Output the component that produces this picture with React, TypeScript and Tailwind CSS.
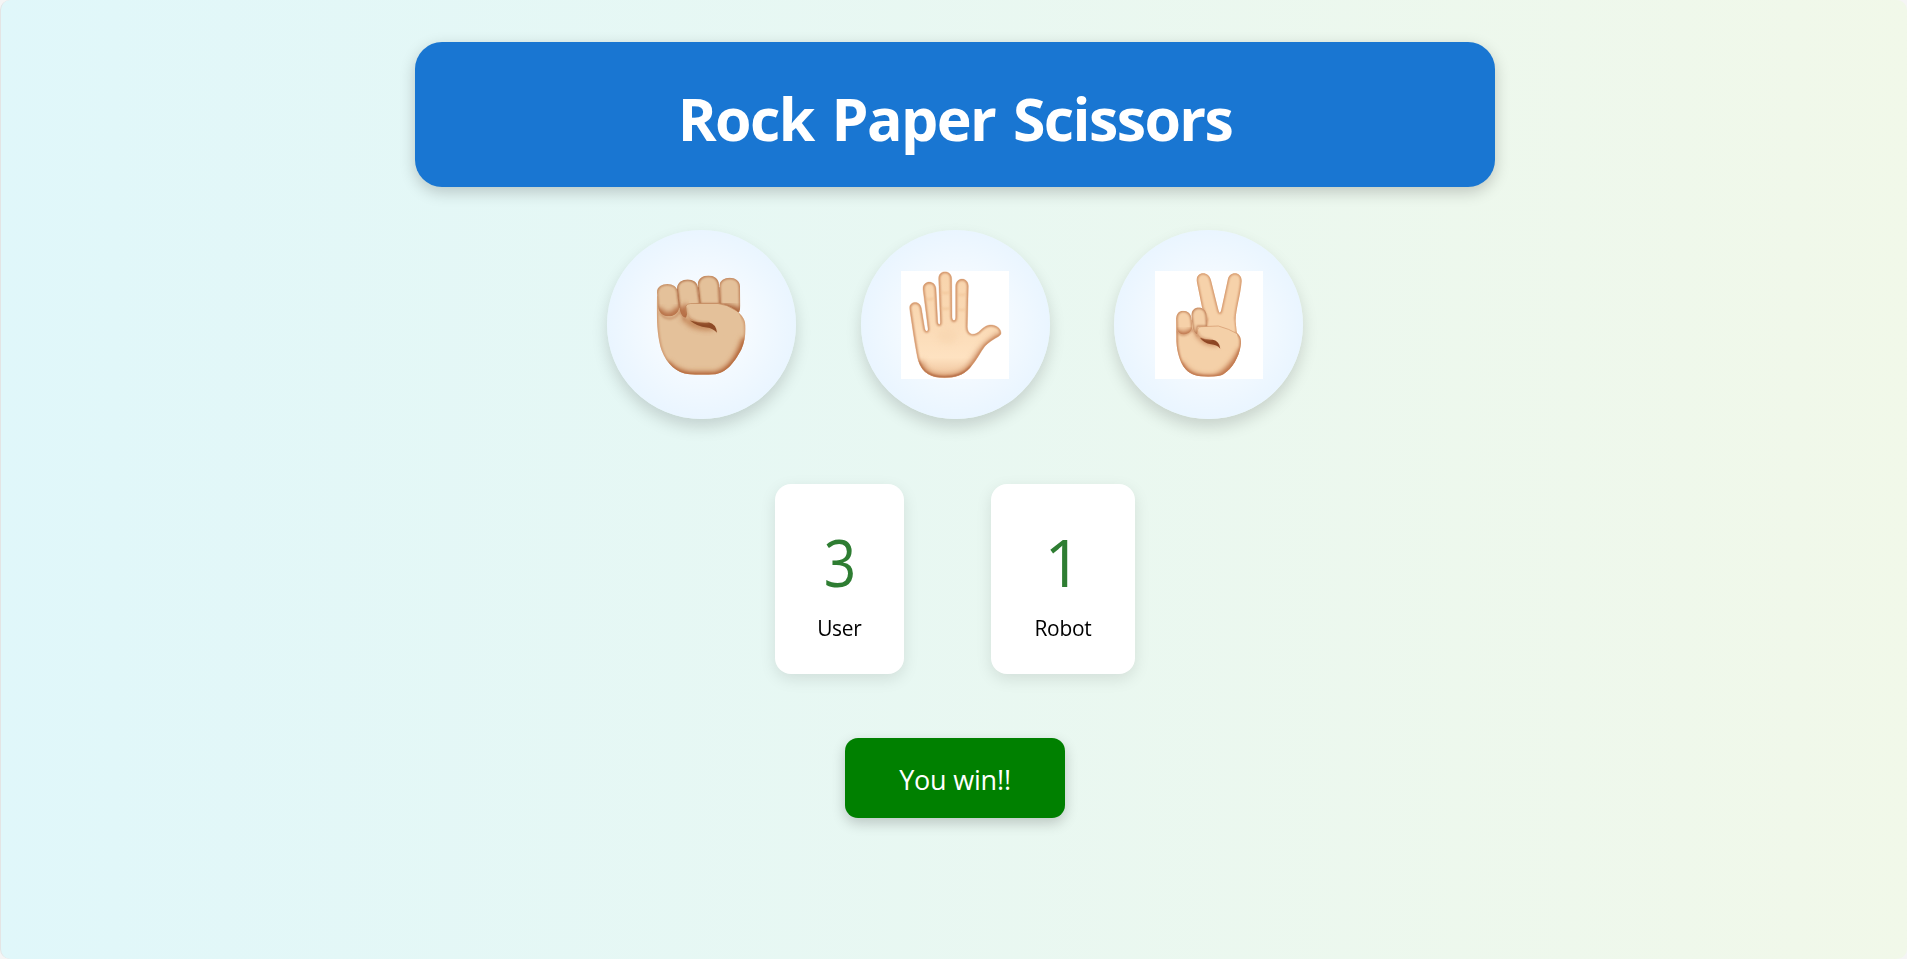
import type { ReactNode } from "react";

function Fist() {
  const finger = "fill-[#e4c19a]";
  return (
    <svg viewBox="142 151.5 324 324" className="size-[108px]" aria-hidden="true">
      <defs>
        <filter id="f-b2" x="-30%" y="-30%" width="160%" height="160%"><feGaussianBlur stdDeviation="2" /></filter>
        <filter id="f-b3" x="-30%" y="-30%" width="160%" height="160%"><feGaussianBlur stdDeviation="3" /></filter>
        <filter id="f-b8" x="-40%" y="-40%" width="180%" height="180%"><feGaussianBlur stdDeviation="8" /></filter>
        <clipPath id="f-body"><path d="M169 225C167 290 169 350 183 390C198 430 228 458 266 461Q300 464 345 461C385 455 410 410 423 385C433 362 437 330 433 305C428 288 418 280 405 268L390 240L180 235Z" /></clipPath>
        <clipPath id="f-1"><path d="M169 216C168 183 231 182 231 216L236 260C232 296 176 298 172 258Z" /></clipPath>
        <clipPath id="f-2"><path d="M229 202C232 168 291 169 292 202L299 252L265 262L256 292C244 290 238 276 236 260Z" /></clipPath>
        <clipPath id="f-3"><path d="M291 193C292 156 354 156 355 193L358 252H298Z" /></clipPath>
        <clipPath id="f-4"><path d="M356 196C358 163 418 163 418 198L419 255Q419 268 415 276L358 251Z" /></clipPath>
      </defs>
      <g clipPath="url(#f-body)">
        <rect x="160" y="160" width="290" height="310" className={finger} />
        <path d="M169 225C167 290 169 350 183 390C198 430 228 458 266 461Q300 464 345 461C385 455 410 410 423 385C433 362 437 330 433 305C428 288 418 280 405 268" fill="none" stroke="#c07a4f" strokeWidth="7" filter="url(#f-b3)" opacity=".65" />
        <path d="M195 430C230 470 270 468 345 466C395 455 420 405 436 355" fill="none" stroke="#b5673b" strokeWidth="25" filter="url(#f-b8)" />
        <path d="M178 275C195 303 225 298 237 272L254 300" fill="none" stroke="#b87349" strokeWidth="6" filter="url(#f-b3)" opacity=".6" />
        <path d="M235 292L272 322Q310 335 343 328L340 306L255 292Z" fill="#c28355" filter="url(#f-b8)" opacity=".85" />
      </g>
      <g clipPath="url(#f-1)">
        <rect x="160" y="180" width="90" height="120" className={finger} />
        <path d="M169 216C168 183 231 182 231 216L236 260C232 296 176 298 172 258Z" fill="none" stroke="#b5754b" strokeWidth="5" filter="url(#f-b3)" />
        <path d="M171 265Q204 307 237 262" fill="none" stroke="#b66c42" strokeWidth="18" filter="url(#f-b8)" />
      </g>
      <g clipPath="url(#f-2)">
        <rect x="220" y="165" width="90" height="140" className={finger} />
        <path d="M229 202C232 168 291 169 292 202L299 252L265 262L256 292C244 290 238 276 236 260Z" fill="none" stroke="#a8643c" strokeWidth="6" filter="url(#f-b3)" />
        <path d="M236 262L256 294L254 252" fill="none" stroke="#b06237" strokeWidth="12" filter="url(#f-b8)" />
      </g>
      <g clipPath="url(#f-3)">
        <rect x="285" y="155" width="80" height="110" className={finger} />
        <path d="M291 193C292 156 354 156 355 193L358 252H298Z" fill="none" stroke="#b06c43" strokeWidth="6" filter="url(#f-b3)" />
      </g>
      <g clipPath="url(#f-4)">
        <rect x="350" y="155" width="80" height="130" className={finger} />
        <path d="M356 196C358 163 418 163 418 198L419 255Q419 268 415 276L358 251Z" fill="none" stroke="#b5714a" strokeWidth="6" filter="url(#f-b3)" />
        <path d="M365 256L420 272" stroke="#a55a32" strokeWidth="18" filter="url(#f-b8)" />
      </g>
      <path d="M230 205L236 262M293 200L298 247M356 200L358 249" fill="none" stroke="#a96139" strokeWidth="2.5" opacity=".7" />
      <path d="M257 259Q256 250 266 249H352Q378 251 405 269Q422 282 421 306Q415 350 382 347Q358 345 349 327Q340 307 324 306Q293 309 271 294C260 285 256 274 257 259Z" fill="#e4c19a" />
      <path d="M268 300Q300 309 325 306Q346 310 349 337Q337 323 318 321Q290 319 268 300Z" fill="#8d4a25" filter="url(#f-b2)" />
      <path d="M257 262Q258 285 273 295Q293 308 325 307" fill="none" stroke="#b97a50" strokeWidth="3" filter="url(#f-b3)" />
      <path d="M257 280L255 258Q258 249 270 249H352Q378 251 408 271" fill="none" stroke="#c08458" strokeWidth="2" />
    </svg>
  );
}

const palm =
  "M179 266C176 244 209 239 214 264L224 325C226 337 235 337 234 325L219 208C217 181 255 178 258 206L263 304C264 317 272 317 271 304L266 176C265 149 304 148 305 176L306 292C307 305 317 305 317 292V198C318 171 354 170 355 198L352 320C353 345 370 347 385 337C400 322 410 314 426 315C446 318 453 330 453 340C452 351 430 353 405 378C390 398 380 420 360 443C340 465 315 473 284 473C245 473 217 460 205 422C198 395 190 340 179 266Z";

function Palm() {
  return (
    <svg viewBox="153 153 324 324" className="size-[108px] bg-white" aria-hidden="true">
      <defs>
        <filter id="p-b3" x="-20%" y="-20%" width="140%" height="140%"><feGaussianBlur stdDeviation="3.5" /></filter>
        <filter id="p-b9" x="-40%" y="-40%" width="180%" height="180%"><feGaussianBlur stdDeviation="9" /></filter>
        <clipPath id="p-clip"><path d={palm} /></clipPath>
        <linearGradient id="p-fill" x1="0" y1="0" x2="0" y2="1">
          <stop offset="0" stopColor="#f8d4ac" />
          <stop offset=".45" stopColor="#fad9b4" />
          <stop offset=".8" stopColor="#fee2c1" />
          <stop offset="1" stopColor="#edc097" />
        </linearGradient>
      </defs>
      <g clipPath="url(#p-clip)">
        <rect x="153" y="153" width="324" height="324" fill="url(#p-fill)" />
        <ellipse cx="292" cy="350" rx="30" ry="22" fill="#f7d3ac" filter="url(#p-b9)" opacity=".5" />
        <path d="M208 425C220 468 250 475 284 476C330 474 350 458 365 440Q390 400 408 380L454 344" fill="none" stroke="#c27a50" strokeWidth="17" filter="url(#p-b9)" />
        <path d={palm} fill="none" stroke="#cb885d" strokeWidth="8" filter="url(#p-b3)" />
        <path d="M205 425C216 462 250 473 284 473C325 473 350 458 365 440" fill="none" stroke="#a95f3b" strokeWidth="6" filter="url(#p-b3)" />
        <path d="M274 217Q286 222 299 217M273 264Q286 269 300 264M226 236Q239 241 252 235M324 223Q336 227 347 222M325 268Q336 272 346 268" fill="none" stroke="#efbf91" strokeWidth="5" filter="url(#p-b3)" opacity=".7" />
      </g>
      <path d={palm} fill="none" stroke="#d69b70" strokeWidth="1.5" opacity=".7" />
    </svg>
  );
}

function Victory() {
  const vee =
    "M275 183C272 153 312 151 318 181L341 273Q344 284 348 273L368 181C371 152 411 152 410 184C407 225 391 272 392 305L396 345L300 330L306 300L291 262Z";
  const base =
    "M214 292V350C213 385 222 425 242 448C258 465 275 470 310 470Q345 470 355 463C383 445 401 412 407 379C411 358 405 345 395 338L380 300H225Z";
  const ring = "M214 298C211 264 258 264 260 298L262 322C258 349 220 350 215 326Z";
  const middle = "M259 286C260 254 303 256 305 286L307 320H278L277 344C264 340 263 322 262 313Z";
  return (
    <svg viewBox="150 153 324 324" className="size-[108px] bg-white" aria-hidden="true">
      <defs>
        <filter id="v-b2" x="-30%" y="-30%" width="160%" height="160%"><feGaussianBlur stdDeviation="2" /></filter>
        <filter id="v-b3" x="-30%" y="-30%" width="160%" height="160%"><feGaussianBlur stdDeviation="3" /></filter>
        <filter id="v-b8" x="-40%" y="-40%" width="180%" height="180%"><feGaussianBlur stdDeviation="8" /></filter>
        <clipPath id="v-vee"><path d={vee} /></clipPath>
        <clipPath id="v-base"><path d={base} /></clipPath>
        <clipPath id="v-ring"><path d={ring} /></clipPath>
        <clipPath id="v-mid"><path d={middle} /></clipPath>
      </defs>
      <g clipPath="url(#v-base)">
        <rect x="200" y="260" width="230" height="220" fill="#f4d0a8" />
        <path d={base} fill="none" stroke="#c37c52" strokeWidth="8" filter="url(#v-b3)" />
        <path d="M225 430Q250 475 310 475Q360 480 410 390" fill="none" stroke="#c0764b" strokeWidth="18" filter="url(#v-b8)" />
        <path d="M215 332Q235 358 262 328L280 350" fill="none" stroke="#be7b53" strokeWidth="6" filter="url(#v-b3)" opacity=".7" />
        <path d="M262 338L295 370Q320 380 342 376L338 358L285 346Z" fill="#cb8b60" filter="url(#v-b8)" />
      </g>
      <g clipPath="url(#v-vee)">
        <rect x="260" y="150" width="170" height="200" fill="#f6d2aa" />
        <path d={vee} fill="none" stroke="#cc885c" strokeWidth="7" filter="url(#v-b3)" />
      </g>
      <path d="M312 300Q345 285 386 300L390 335Q360 324 312 320Z" fill="#f6d2aa" filter="url(#v-b3)" />
      <g clipPath="url(#v-ring)">
        <rect x="205" y="260" width="70" height="100" fill="#f6d1a9" />
        <path d={ring} fill="none" stroke="#bd7950" strokeWidth="6" filter="url(#v-b3)" />
        <path d="M214 333Q239 355 262 329" fill="none" stroke="#bb7047" strokeWidth="14" filter="url(#v-b8)" />
      </g>
      <g clipPath="url(#v-mid)">
        <rect x="250" y="250" width="70" height="110" fill="#f4cfa7" />
        <path d={middle} fill="none" stroke="#b36e46" strokeWidth="6" filter="url(#v-b3)" />
      </g>
      <path d="M278 331Q276 321 288 320L340 318Q374 327 395 340Q400 351 394 372Q375 398 355 390Q347 386 345 375Q336 359 319 359Q278 358 278 331Z" fill="#f4d0a8" />
      <path d="M285 353Q303 361 323 359Q343 363 346 386Q335 374 318 373Q296 369 285 353Z" fill="#8d4424" filter="url(#v-b2)" />
      <path d="M278 334Q283 358 319 359" fill="none" stroke="#c1815a" strokeWidth="3" filter="url(#v-b3)" />
      <path d="M278 337Q276 321 288 320L340 318Q374 327 396 341" fill="none" stroke="#d19468" strokeWidth="2" />
    </svg>
  );
}

function Choice({ label, children }: { label: string; children: ReactNode }) {
  return (
    <button
      aria-label={label}
      className="flex size-[189px] items-center justify-center rounded-full bg-[radial-gradient(circle,#ffffff,#e1f1ff)] shadow-[0_8px_16px_rgba(0,0,0,0.15)]"
    >
      {children}
    </button>
  );
}

function Score({ className, digit, value, label }: { className: string; digit: string; value: number; label: string }) {
  return (
    <div
      className={`flex h-[190px] flex-col items-center rounded-2xl bg-white pt-[33px] shadow-[0_5px_16px_rgba(0,0,0,0.1)] ${className}`}
    >
      <p className={`text-[66px] leading-[89px] text-[#2e7d32] ${digit}`}>{value}</p>
      <p className="mt-[6px] scale-x-[0.95] text-[22px] leading-[30px] tracking-[-0.3px] text-black">{label}</p>
    </div>
  );
}

export default function App() {
  return (
    <div className="h-[959px] overflow-hidden bg-[#f5f5f5] font-['Open_Sans','Noto_Sans',sans-serif]">
      <main className="flex h-[959px] flex-col items-center rounded-[10px] border-l border-[#e4e4e4] bg-linear-to-r from-[#e0f7fa] to-[#f1f8e9] pt-[42px] pl-[2px]">
        <header className="flex h-[145px] w-[1080px] items-center justify-center rounded-[27px] bg-[#1976d2] shadow-[0_5px_16px_rgba(0,0,0,0.2)]">
          <h1 className="pt-[6px] text-[59px] leading-[80px] font-bold tracking-[-1.6px] text-white [word-spacing:4px]">
            Rock Paper Scissors
          </h1>
        </header>
        <section className="mt-[43px] flex gap-[64.5px]">
          <Choice label="Rock"><Fist /></Choice>
          <Choice label="Paper"><Palm /></Choice>
          <Choice label="Scissors"><Victory /></Choice>
        </section>
        <section className="mt-[65px] flex gap-[87px]">
          <Score className="w-[129px]" digit="scale-x-[0.86]" value={3} label="User" />
          <Score className="w-[144px]" digit="scale-x-[0.98]" value={1} label="Robot" />
        </section>
        <p className="mt-16 flex h-20 w-[220px] items-center justify-center rounded-[13px] bg-[#008000] pt-1 text-[27px] tracking-[-0.2px] text-white shadow-[0_5px_14px_rgba(0,0,0,0.2)]">
          You win!!
        </p>
      </main>
    </div>
  );
}
